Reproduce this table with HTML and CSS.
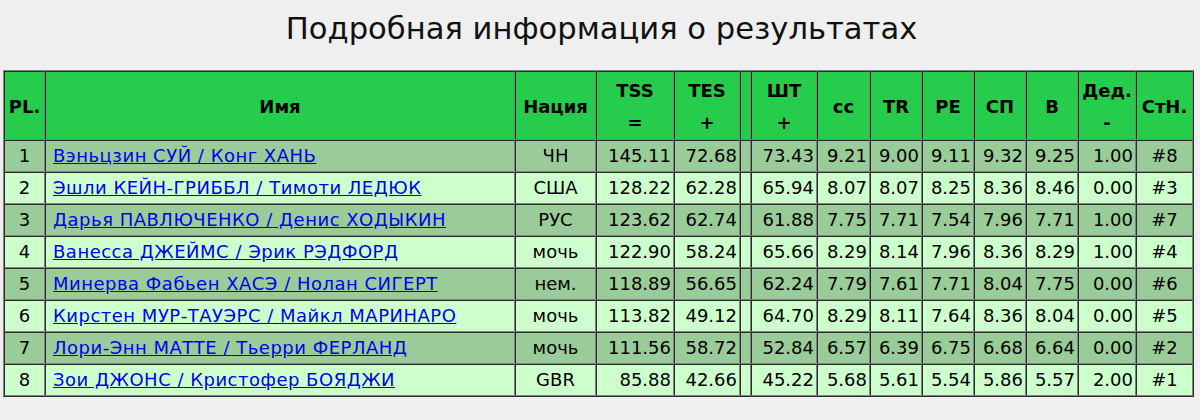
FILE: index.html
```html
<!DOCTYPE html>
<html lang="ru">
<head>
<meta charset="utf-8">
<title>Подробная информация о результатах</title>
<link rel="stylesheet" href="styles.css">
</head>
<body>
<div class="page">
  <h1 class="title">Подробная информация о результатах</h1>
  <table class="results">
    <colgroup>
      <col class="c-pl"><col class="c-name"><col class="c-nat"><col class="c-tss"><col class="c-tes"><col class="c-gap"><col class="c-pcs"><col class="c-cmp"><col class="c-cmp2"><col class="c-cmp2"><col class="c-cmp2"><col class="c-cmp2"><col class="c-ded"><col class="c-sn">
    </colgroup>
    <thead>
      <tr class="head">
        <th>PL.</th>
        <th>Имя</th>
        <th>Нация</th>
        <th>TSS<br>=</th>
        <th>TES<br>+</th>
        <th></th>
        <th>ШТ<br>+</th>
        <th>cc</th>
        <th>TR</th>
        <th>PE</th>
        <th>СП</th>
        <th>B</th>
        <th>Дед.<br>-</th>
        <th>СтН.</th>
      </tr>
    </thead>
    <tbody>
      <tr class="odd"><td class="ctr">1</td><td class="name"><a href="#">Вэньцзин СУЙ / Конг ХАНЬ</a></td><td class="ctr">ЧН</td><td class="num">145.11</td><td class="num">72.68</td><td></td><td class="num">73.43</td><td class="num">9.21</td><td class="num">9.00</td><td class="num">9.11</td><td class="num">9.32</td><td class="num">9.25</td><td class="num">1.00</td><td class="ctr">#8</td></tr>
      <tr class="even"><td class="ctr">2</td><td class="name"><a href="#">Эшли КЕЙН-ГРИББЛ / Тимоти ЛЕДЮК</a></td><td class="ctr">США</td><td class="num">128.22</td><td class="num">62.28</td><td></td><td class="num">65.94</td><td class="num">8.07</td><td class="num">8.07</td><td class="num">8.25</td><td class="num">8.36</td><td class="num">8.46</td><td class="num">0.00</td><td class="ctr">#3</td></tr>
      <tr class="odd"><td class="ctr">3</td><td class="name"><a href="#">Дарья ПАВЛЮЧЕНКО / Денис ХОДЫКИН</a></td><td class="ctr">РУС</td><td class="num">123.62</td><td class="num">62.74</td><td></td><td class="num">61.88</td><td class="num">7.75</td><td class="num">7.71</td><td class="num">7.54</td><td class="num">7.96</td><td class="num">7.71</td><td class="num">1.00</td><td class="ctr">#7</td></tr>
      <tr class="even"><td class="ctr">4</td><td class="name"><a href="#">Ванесса ДЖЕЙМС / Эрик РЭДФОРД</a></td><td class="ctr">мочь</td><td class="num">122.90</td><td class="num">58.24</td><td></td><td class="num">65.66</td><td class="num">8.29</td><td class="num">8.14</td><td class="num">7.96</td><td class="num">8.36</td><td class="num">8.29</td><td class="num">1.00</td><td class="ctr">#4</td></tr>
      <tr class="odd"><td class="ctr">5</td><td class="name"><a href="#">Минерва Фабьен ХАСЭ / Нолан СИГЕРТ</a></td><td class="ctr">нем.</td><td class="num">118.89</td><td class="num">56.65</td><td></td><td class="num">62.24</td><td class="num">7.79</td><td class="num">7.61</td><td class="num">7.71</td><td class="num">8.04</td><td class="num">7.75</td><td class="num">0.00</td><td class="ctr">#6</td></tr>
      <tr class="even"><td class="ctr">6</td><td class="name"><a href="#">Кирстен МУР-ТАУЭРС / Майкл МАРИНАРО</a></td><td class="ctr">мочь</td><td class="num">113.82</td><td class="num">49.12</td><td></td><td class="num">64.70</td><td class="num">8.29</td><td class="num">8.11</td><td class="num">7.64</td><td class="num">8.36</td><td class="num">8.04</td><td class="num">0.00</td><td class="ctr">#5</td></tr>
      <tr class="odd"><td class="ctr">7</td><td class="name"><a href="#">Лори-Энн МАТТЕ / Тьерри ФЕРЛАНД</a></td><td class="ctr">мочь</td><td class="num">111.56</td><td class="num">58.72</td><td></td><td class="num">52.84</td><td class="num">6.57</td><td class="num">6.39</td><td class="num">6.75</td><td class="num">6.68</td><td class="num">6.64</td><td class="num">0.00</td><td class="ctr">#2</td></tr>
      <tr class="even"><td class="ctr">8</td><td class="name"><a href="#">Зои ДЖОНС / Кристофер БОЯДЖИ</a></td><td class="ctr">GBR</td><td class="num">85.88</td><td class="num">42.66</td><td></td><td class="num">45.22</td><td class="num">5.68</td><td class="num">5.61</td><td class="num">5.54</td><td class="num">5.86</td><td class="num">5.57</td><td class="num">2.00</td><td class="ctr">#1</td></tr>
    </tbody>
  </table>
</div>
</body>
</html>
```
FILE: styles.css
```css
html, body {
  margin: 0;
  padding: 0;
  background: #efefef;
}

body {
  font-family: "DejaVu Sans", Verdana, sans-serif;
  color: #000;
}

.page {
  padding: 0 0 0 3px;
}

.title {
  margin: 0;
  height: 70px;
  line-height: 58px;
  font-size: 30.6px;
  font-weight: normal;
  text-align: center;
  color: #111;
  font-family: "DejaVu Sans", sans-serif;
}

.results {
  width: 1191px;
  table-layout: fixed;
  border-collapse: separate;
  border-spacing: 0;
  border: 1px outset #808080;
  font-size: 18px;
}

.c-pl { width: 41px; }
.c-name { width: 470px; }
.c-nat { width: 81px; }
.c-tss { width: 78px; }
.c-tes { width: 66px; }
.c-gap { width: 11px; }
.c-pcs { width: 66px; }
.c-cmp { width: 53px; }
.c-cmp2 { width: 52px; }
.c-ded { width: 58px; }
.c-sn { width: 57px; }

.results th,
.results td {
  box-sizing: border-box;
  border: 1px inset #808080;
  white-space: nowrap;
  overflow: hidden;
}

.head th {
  background: #26cc4c;
  font-weight: bold;
  line-height: 32px;
  height: 69px;
  padding: 3px 0 0;
  text-align: center;
  vertical-align: middle;
}

.results td {
  height: 32px;
  line-height: 30px;
  padding: 0;
}

.odd td { background: #99cc99; }
.even td { background: #ccffcc; }

.ctr { text-align: center; }
.num { text-align: right; padding-right: 2px !important; }
.name { text-align: left; padding-left: 7px !important; }

.name a {
  color: #0000ee;
  text-decoration: underline;
  letter-spacing: 0.5px;
}
```
